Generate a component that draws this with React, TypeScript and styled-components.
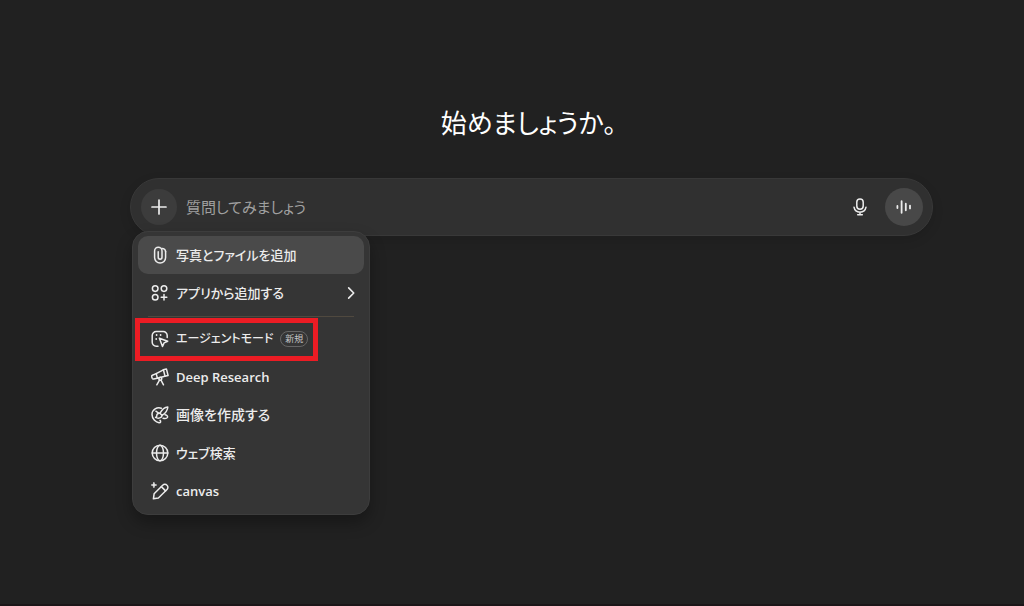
import React from "react";
import styled, { createGlobalStyle } from "styled-components";

const GlobalStyle = createGlobalStyle`
  *, *::before, *::after { box-sizing: border-box; }
  body {
    margin: 0;
    background: #212121;
    color: #ececec;
    font-family: "Open Sans", "Noto Sans CJK JP", sans-serif;
    font-feature-settings: "palt";
  }
  button, input { font: inherit; font-feature-settings: inherit; color: inherit; }
`;

const Page = styled.main`
  display: flex;
  flex-direction: column;
  min-height: 100vh;
  padding: 98px 91px 0 130px;
  border-bottom: 2px solid #1b1618;
`;

const Heading = styled.h1`
  margin: 0 6px 32px 0;
  text-align: center;
  font-family: "Noto Sans CJK JP", sans-serif;
  font-size: 26px;
  font-weight: 400;
  line-height: 48px;
  color: #fff;
`;

const Composer = styled.form`
  position: relative;
  display: flex;
  align-items: center;
  height: 58px;
  padding: 0 9px 0 10px;
  border: 1px solid #383838;
  border-radius: 29px;
  background: #303030;
  box-shadow: 0 4px 12px rgba(0, 0, 0, 0.12);
`;

const RoundButton = styled.button<{ $size: number; $fill: string }>`
  display: flex;
  flex: none;
  align-items: center;
  justify-content: center;
  width: ${(p) => p.$size}px;
  height: ${(p) => p.$size}px;
  padding: 0;
  border: 0;
  border-radius: 50%;
  background: ${(p) => p.$fill};
`;

const Prompt = styled.input`
  flex: 1;
  min-width: 0;
  height: 32px;
  margin: 0 9px;
  padding: 0;
  border: 0;
  outline: 0;
  background: transparent;
  font-size: 15px;
  &::placeholder { color: #a0a0a0; opacity: 1; }
`;

const Menu = styled.div`
  position: absolute;
  top: 52px;
  left: 1px;
  width: 238px;
  padding: 4px 5px;
  border: 1px solid #3d3d3d;
  border-radius: 16px;
  background: #353535;
  box-shadow: 0 8px 16px rgba(0, 0, 0, 0.3);
`;

const MenuItem = styled.button<{ $active?: boolean }>`
  position: relative;
  display: flex;
  align-items: center;
  gap: 7px;
  width: 100%;
  height: 38px;
  padding: 0 6px 0 13px;
  border: 0;
  border-radius: 10px;
  background: ${(p) => (p.$active ? "#4a4a4a" : "transparent")};
  line-height: 20px;
  text-align: left;
  white-space: nowrap;
  svg { flex: none; }
`;

const labelSizes = { small: 12, medium: 13, large: 14 };

const Label = styled.span<{ $grow?: boolean; $size?: keyof typeof labelSizes; $latin?: boolean }>`
  flex: ${(p) => (p.$grow ? 1 : "none")};
  font-size: ${(p) => labelSizes[p.$size ?? "medium"]}px;
  font-weight: ${(p) => (p.$latin ? 600 : 500)};
`;

const Divider = styled.hr`
  height: 1px;
  margin: 4px 10px 3px;
  border: 0;
  background: #50493f;
`;

const Badge = styled.span`
  padding: 0 4px;
  border: 1px solid #666;
  border-radius: 8px;
  font-size: 9px;
  line-height: 14px;
  color: #c4c4c4;
`;

const Highlight = styled.span`
  position: absolute;
  top: -2px;
  left: -3px;
  width: 183px;
  height: 43px;
  border: 5px solid #ec1c24;
  pointer-events: none;
`;

const Icon = ({ size = 18, children }: { size?: number; children: React.ReactNode }) => (
  <svg width={size} height={size} viewBox="0 0 18 18" fill="none" stroke="#ececec"
    strokeWidth="1.5" strokeLinecap="round" strokeLinejoin="round" aria-hidden="true">
    {children}
  </svg>
);

const PlusIcon = () => <Icon><path strokeWidth="1.7" d="M9 2v14M2 9h14" /></Icon>;

const MicIcon = () => (
  <Icon>
    <rect x="5.8" y="0.9" width="6.4" height="10.4" rx="3.2" />
    <path d="M3 9.2a6.1 6.1 0 0 0 12 0M9 14v2.7M6.7 16.8h4.6" />
  </Icon>
);

const VoiceIcon = () => (
  <Icon>
    <path strokeWidth="1.8" d="M2.4 8v2M6.6 3.2v11.6M10.8 5.7v6.6M15 7.6v2.8" />
  </Icon>
);

const ClipIcon = () => (
  <Icon>
    <path d="M14.6 5.6v6a5.5 5.5 0 0 1-11 0V5A3.7 3.7 0 0 1 11 5v6.3a1.9 1.9 0 0 1-3.8 0V5.7" />
    <path d="M11 2.4a3.4 3.4 0 0 1 3.6 3.4" />
  </Icon>
);

const AppsIcon = () => (
  <Icon>
    <circle cx="4.2" cy="4.6" r="2.8" />
    <circle cx="13" cy="4.6" r="2.8" />
    <circle cx="4.2" cy="13.2" r="2.8" />
    <path d="M13 10.4v5.6M10.2 13.2h5.6" />
  </Icon>
);

const AgentIcon = () => (
  <Icon>
    <path d="M7 16.2H5.2A4 4 0 0 1 1.2 12.2V5.5a4 4 0 0 1 4-4h7a4 4 0 0 1 4 4v2" />
    <path d="M8.4 8.2l8.3 3.1-3.6 1.6-1.6 3.6z" />
    <path d="M5.6 5v.1M9.6 5v.1M5.2 9v.1" strokeWidth="1.8" />
  </Icon>
);

const TelescopeIcon = () => (
  <Icon>
    <path d="M5.2 5.6l7.2-3.8 3-.9 1.7 6.6-3.3.8-7.4 1.9z" />
    <path d="M5.2 5.6l-3.8 1.7c-.7.3-.9.8-.7 1.4l.5 1.5c.3.7.8.8 1.5.7l3.7-.7M12.4 1.8l1.6 6.3" />
    <circle cx="9.3" cy="10.8" r="1.5" />
    <path d="M8.5 12.2l-2.7 4.6M10 12.2l2.5 4.6" />
  </Icon>
);

const ImageIcon = () => (
  <Icon>
    <path d="M10.4 2.3C6.2.6 1 3.6 1 8.5c0 4.8 4.2 7.9 7 8.2 1.9.1 2-1.4 1-2.3" />
    <path d="M16.8 1c-2.5.1-6 2.8-7.9 6.3l2.2 2.1C14.4 7.6 16.8 3.7 16.8 1z" />
    <path d="M8.8 7.3c-2-.3-3.2 1.1-3 2.4.1 1-.6 1.4-1.2 1.7 2.7 1.5 6.3.5 6.5-2" />
    <path d="M14 8.7c2.2.4 3 1.7 2.4 2.8-.6 1.1-2.4 1.2-4.3.8M4.9 5.2l3 2.1" />
  </Icon>
);

const GlobeIcon = () => (
  <Icon>
    <circle cx="9" cy="9" r="7.8" />
    <ellipse cx="9" cy="9" rx="3.5" ry="7.8" />
    <path d="M1.2 9h15.6" />
  </Icon>
);

const CanvasIcon = () => (
  <Icon>
    <path d="M3.1 11.8l8.6-8.6a3 3 0 0 1 4.3 0 3 3 0 0 1 0 4.3L7.4 16l-5 .8z" />
    <path d="M10.3 4.6l4.3 4.3" />
    <path d="M2.9 0l.8 2.2 2.2.8-2.2.8-.8 2.2-.8-2.2L0 3l2.1-.8z" fill="#ececec" stroke="#ececec" strokeWidth="0.5" />
  </Icon>
);

const ChevronIcon = () => (
  <Icon size={14}><path strokeWidth="2.1" d="M6 2.5l6.5 6.5L6 15.5" /></Icon>
);

export default function App() {
  return (
    <>
      <GlobalStyle />
      <Page>
        <Heading>始めましょうか。</Heading>
        <Composer onSubmit={(e) => e.preventDefault()}>
          <RoundButton type="button" $size={36} $fill="#3c3c3c" aria-label="追加" aria-expanded="true">
            <PlusIcon />
          </RoundButton>
          <Prompt type="text" placeholder="質問してみましょう" aria-label="質問してみましょう" />
          <RoundButton type="button" $size={50} $fill="transparent" aria-label="音声入力">
            <MicIcon />
          </RoundButton>
          <RoundButton type="button" $size={38} $fill="#484848" aria-label="音声モード">
            <VoiceIcon />
          </RoundButton>
          <Menu role="menu">
            <MenuItem type="button" role="menuitem" $active>
              <ClipIcon />
              <Label>写真とファイルを追加</Label>
            </MenuItem>
            <MenuItem type="button" role="menuitem">
              <AppsIcon />
              <Label $grow>アプリから追加する</Label>
              <ChevronIcon />
            </MenuItem>
            <Divider />
            <MenuItem type="button" role="menuitem">
              <AgentIcon />
              <Label $size="small">エージェントモード</Label>
              <Badge>新規</Badge>
              <Highlight />
            </MenuItem>
            <MenuItem type="button" role="menuitem">
              <TelescopeIcon />
              <Label $latin>Deep Research</Label>
            </MenuItem>
            <MenuItem type="button" role="menuitem">
              <ImageIcon />
              <Label $size="large">画像を作成する</Label>
            </MenuItem>
            <MenuItem type="button" role="menuitem">
              <GlobeIcon />
              <Label>ウェブ検索</Label>
            </MenuItem>
            <MenuItem type="button" role="menuitem">
              <CanvasIcon />
              <Label $latin>canvas</Label>
            </MenuItem>
          </Menu>
        </Composer>
      </Page>
    </>
  );
}
